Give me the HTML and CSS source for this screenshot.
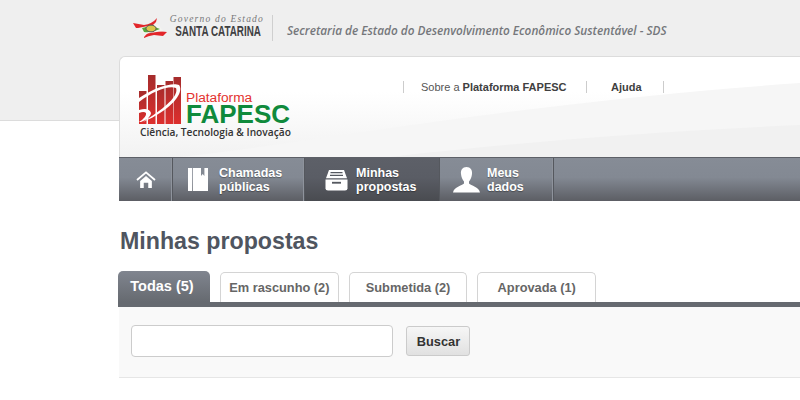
FILE: index.html
```html
<!DOCTYPE html>
<html lang="pt-BR">
<head>
<meta charset="utf-8">
<title>Minhas propostas</title>
<link rel="stylesheet" href="styles.css">
</head>
<body>
<div class="band">
  <div class="wrap">
    <div class="gov">
      <svg class="flag" width="36" height="22" viewBox="0 0 36 22">
        <path d="M1 6 L12 8 Q20 7 25 1 L24 5 L19 10 L10 11 L4 11 Z" fill="#e2262a"/>
        <path d="M12 20 Q17 13 24 14 L35 15 L31 19 L22 18 Q16 19 12 21 Z" fill="#e2262a"/>
        <path d="M6 11 L26 7 L31 14 L12 17 Z" fill="#f4f4f0"/>
        <path d="M10 11 Q20 8 28 12 Q20 16 12 15 Z" fill="#58a83a"/>
        <ellipse cx="19" cy="11.5" rx="5" ry="3.4" fill="#d9c64a" stroke="#555" stroke-width="1"/>
      </svg>
      <div class="gov-name">
        <span class="gov-top">Governo do Estado</span>
        <span class="gov-state">SANTA CATARINA</span>
      </div>
      <span class="gov-rule"></span>
      <span class="gov-sec">Secretaria de Estado do Desenvolvimento Econômico Sustentável - SDS</span>
    </div>
    <div class="card">
      <svg class="waves" width="681" height="100" viewBox="0 0 681 100">
        <path d="M60 100 C200 85 400 45 681 26 L681 100 Z" fill="#f6f6f6"/>
        <path d="M270 100 C400 85 540 74 681 68 L681 100 Z" fill="#f1f1f1"/>
      </svg>
      <div class="logo">
        <div class="logo-row">
          <svg class="logo-mark" width="43" height="50" viewBox="0 0 43 50">
            <defs>
              <linearGradient id="barfill" x1="0" y1="0" x2="0" y2="1">
                <stop offset="0" stop-color="#a52c2c"/>
                <stop offset="1" stop-color="#dd2f2d"/>
              </linearGradient>
            </defs>
            <rect x="0" y="17" width="7.5" height="33" fill="url(#barfill)"/>
            <rect x="9" y="1" width="7.5" height="49" fill="url(#barfill)"/>
            <rect x="18" y="11" width="7.5" height="39" fill="url(#barfill)"/>
            <rect x="26.5" y="7" width="7.5" height="43" fill="url(#barfill)"/>
            <rect x="34.5" y="3" width="7.5" height="47" fill="url(#barfill)"/>
            <path d="M0 24 C16 13 34 8 40 11 C45 17 36 34 4 48 C26 34 40 22 37 14 C30 11 14 17 0 28 Z" fill="#fff"/>
            <path d="M0 36 Q10 33 12 39 Q12 44 2 48 L0 48 Q8 43 7 39 Q5 37 0 39 Z" fill="#fff"/>
          </svg>
          <div class="logo-words">
            <span class="logo-plat">Plataforma</span>
            <span class="logo-fapesc">FAPESC</span>
          </div>
        </div>
        <span class="logo-tag">Ciência, Tecnologia &amp; Inovação</span>
      </div>
      <ul class="toplinks">
        <li class="toplink toplink-sobre">Sobre a <b>Plataforma FAPESC</b></li>
        <li class="toplink toplink-ajuda"><b>Ajuda</b></li>
      </ul>
    </div>
    <nav class="nav">
      <a class="nav-item nav-home">
        <svg width="20" height="18" viewBox="0 0 22 20">
          <path d="M1 10 L11 1.5 L21 10" fill="none" stroke="#fff" stroke-width="2"/>
          <path d="M4.500 11 L11 5.500 L17.500 11 V19 H13.500 V13 H8.500 V19 H4.500 Z" fill="#fff"/>
        </svg>
      </a>
      <a class="nav-item nav-cham">
        <svg width="20" height="23" viewBox="0 0 20 23">
          <path d="M0 0 H4 V23 H0 Z" fill="#fff"/>
          <path d="M4.800 0 H13 V8 L14.700 6 L16.400 8 V0 H20 V23 H4.800 Z" fill="#fff"/>
        </svg>
        <span class="nav-label">Chamadas<br>públicas</span>
      </a>
      <a class="nav-item nav-minhas is-active">
        <svg width="23" height="22" viewBox="0 0 23 24" preserveAspectRatio="none">
          <path d="M4 1 H19 L22 10 H1 Z" fill="#fff"/>
          <path d="M5.500 4 H17.500 M5 7 H18" stroke="#555960" stroke-width="1.2"/>
          <path d="M0.500 11.500 H22.500 V21 Q22.500 23.500 20 23.500 H3 Q0.500 23.500 0.500 21 Z" fill="#fff"/>
          <rect x="7" y="14" width="9" height="2" fill="#555960"/>
        </svg>
        <span class="nav-label">Minhas<br>propostas</span>
      </a>
      <a class="nav-item nav-meus">
        <svg width="27" height="26" viewBox="0 0 27 26">
          <path d="M13.500 0 C17.500 0 19.500 3 19 7 C18.700 10 17.500 13 16 14.500 V16.500 C18 18.500 26 20 27 25.500 H0 C1 20 9 18.500 11 16.500 V14.500 C9.500 13 8.300 10 8 7 C7.500 3 9.500 0 13.500 0 Z" fill="#fff"/>
        </svg>
        <span class="nav-label">Meus<br>dados</span>
      </a>
    </nav>
    <main class="main">
      <h1 class="title">Minhas propostas</h1>
      <div class="tabs">
        <a class="tab is-active">Todas (5)</a>
        <a class="tab">Em rascunho (2)</a>
        <a class="tab">Submetida (2)</a>
        <a class="tab">Aprovada (1)</a>
      </div>
      <form class="search">
        <input class="search-input" type="text">
        <button class="search-btn" type="button">Buscar</button>
      </form>
    </main>
  </div>
</div>
</body>
</html>
```
FILE: styles.css
```css
* { box-sizing: border-box; }
html, body { margin: 0; height: 400px; overflow: hidden; background: #fff; }
body { font-family: "Liberation Sans", Arial, sans-serif; }

.band { height: 121px; background: #efefef; border-bottom: 1px solid #dcdcdc; }
.wrap { width: 681px; margin-left: 119px; }

.gov { height: 56px; display: flex; align-items: flex-start; padding-top: 14px; }
.flag { margin: 3px 0 0 13px; flex: none; }
.gov-name { width: 95px; margin-left: 1px; display: flex; flex-direction: column; align-items: flex-end; }
.gov-top { font: italic 9.500px/10px "Liberation Serif", serif; letter-spacing: 1.200px; color: #77787a; white-space: nowrap; }
.gov-state { font: bold 14.500px/15px "Liberation Sans", sans-serif; color: #3f4042; white-space: nowrap; margin-right: 3px; transform: scaleX(.68); transform-origin: right center; }
.gov-rule { width: 1px; height: 26px; background: #cfcfcf; margin: 1px 14px 0 8px; flex: none; }
.gov-sec { font: italic 600 11.800px/20px "Open Sans", sans-serif; color: #75777b; white-space: nowrap; margin-top: 6px; }

.card { position: relative; height: 101px; background: linear-gradient(#fff 0, #fff 35%, #f2f2f2 100%); border: 1px solid #dcdcdc; border-width: 1px 0 0 1px; border-radius: 6px 0 0 0; display: flex; align-items: flex-start; }
.waves { position: absolute; left: 0; bottom: 0; }
.logo { position: relative; width: 283px; padding: 17px 0 0 19px; flex: none; display: flex; flex-direction: column; }
.logo-row { display: flex; align-items: flex-end; }
.logo-mark { flex: none; }
.logo-words { margin-left: 4px; display: flex; flex-direction: column; }
.logo-plat { font-size: 13.700px; line-height: 13px; color: #e4322f; }
.logo-fapesc { font-size: 26px; line-height: 20px; font-weight: bold; color: #0f8a3c; }
.logo-tag { font: 600 10.200px/14px "Open Sans", sans-serif; color: #333; margin: 1px 0 0 1px; white-space: nowrap; }

.toplinks { position: relative; list-style: none; margin: 24px 0 0; padding: 0; display: flex; border-left: 1px solid #ccc; height: 12px; }
.toplink { height: 12px; font-size: 11px; line-height: 12px; color: #555; border-right: 1px solid #ccc; white-space: nowrap; }
.toplink b { color: #404040; }
.toplink-sobre { width: 183px; padding-left: 17px; }
.toplink-ajuda { width: 77px; padding-left: 24px; }

.nav { height: 44px; display: flex; background: linear-gradient(#868c96 0, #838993 45%, #5c5e64 100%); border-top: 1px solid #5d6067; }
.nav-item { display: flex; align-items: center; color: #fff; font-size: 12.500px; line-height: 14px; font-weight: bold; border-right: 1px solid #55585e; box-shadow: inset -1px 0 0 #8e939c; }
.nav-label { text-shadow: 0 1px 1px rgba(0,0,0,.35); }
.nav-home { width: 54px; padding-left: 17px; }
.nav-cham { width: 132px; padding-left: 15px; gap: 11px; }
.nav-minhas { width: 135px; padding-left: 20px; gap: 8px; }
.nav-meus { width: 114px; padding-left: 13px; gap: 7px; }
.nav-item.is-active { background: linear-gradient(#5d6068 0, #5a5d65 45%, #494b50 100%); box-shadow: none; }

.main { padding-top: 26px; }
.title { margin: 0 0 16px 1px; font-size: 23.200px; line-height: 28px; font-weight: bold; color: #4f5560; }
.tabs { display: flex; align-items: flex-end; gap: 10px; margin-left: -1px; border-bottom: 5px solid #666a70; height: 36px; }
.tab { width: 118.700px; height: 30px; text-align: center; font-size: 12.800px; line-height: 29px; font-weight: bold; color: #666; background: #fff; border: 1px solid #d4d4d4; border-bottom: 0; border-radius: 5px 5px 0 0; }
.tab.is-active { width: 92px; height: 31px; padding-right: 4px; font-size: 14.500px; color: #fff; border: 0; line-height: 30px; background: linear-gradient(#80858f, #666a70); }
.search { height: 71px; background: #f9f9f9; border-bottom: 1px solid #e6e6e6; display: flex; align-items: flex-start; padding: 18px 0 0 12px; }
.search-input { width: 262px; height: 32px; padding: 0; background: #fff; border: 1px solid #ccc; border-radius: 4px; }
.search-btn { width: 64px; height: 30px; margin: 1px 0 0 13px; padding: 0 0 0 1px; font: bold 12.800px "Liberation Sans", sans-serif; color: #333; background: linear-gradient(#f6f6f6, #e1e1e1); border: 1px solid #cbcbcb; border-radius: 3px; }
```
